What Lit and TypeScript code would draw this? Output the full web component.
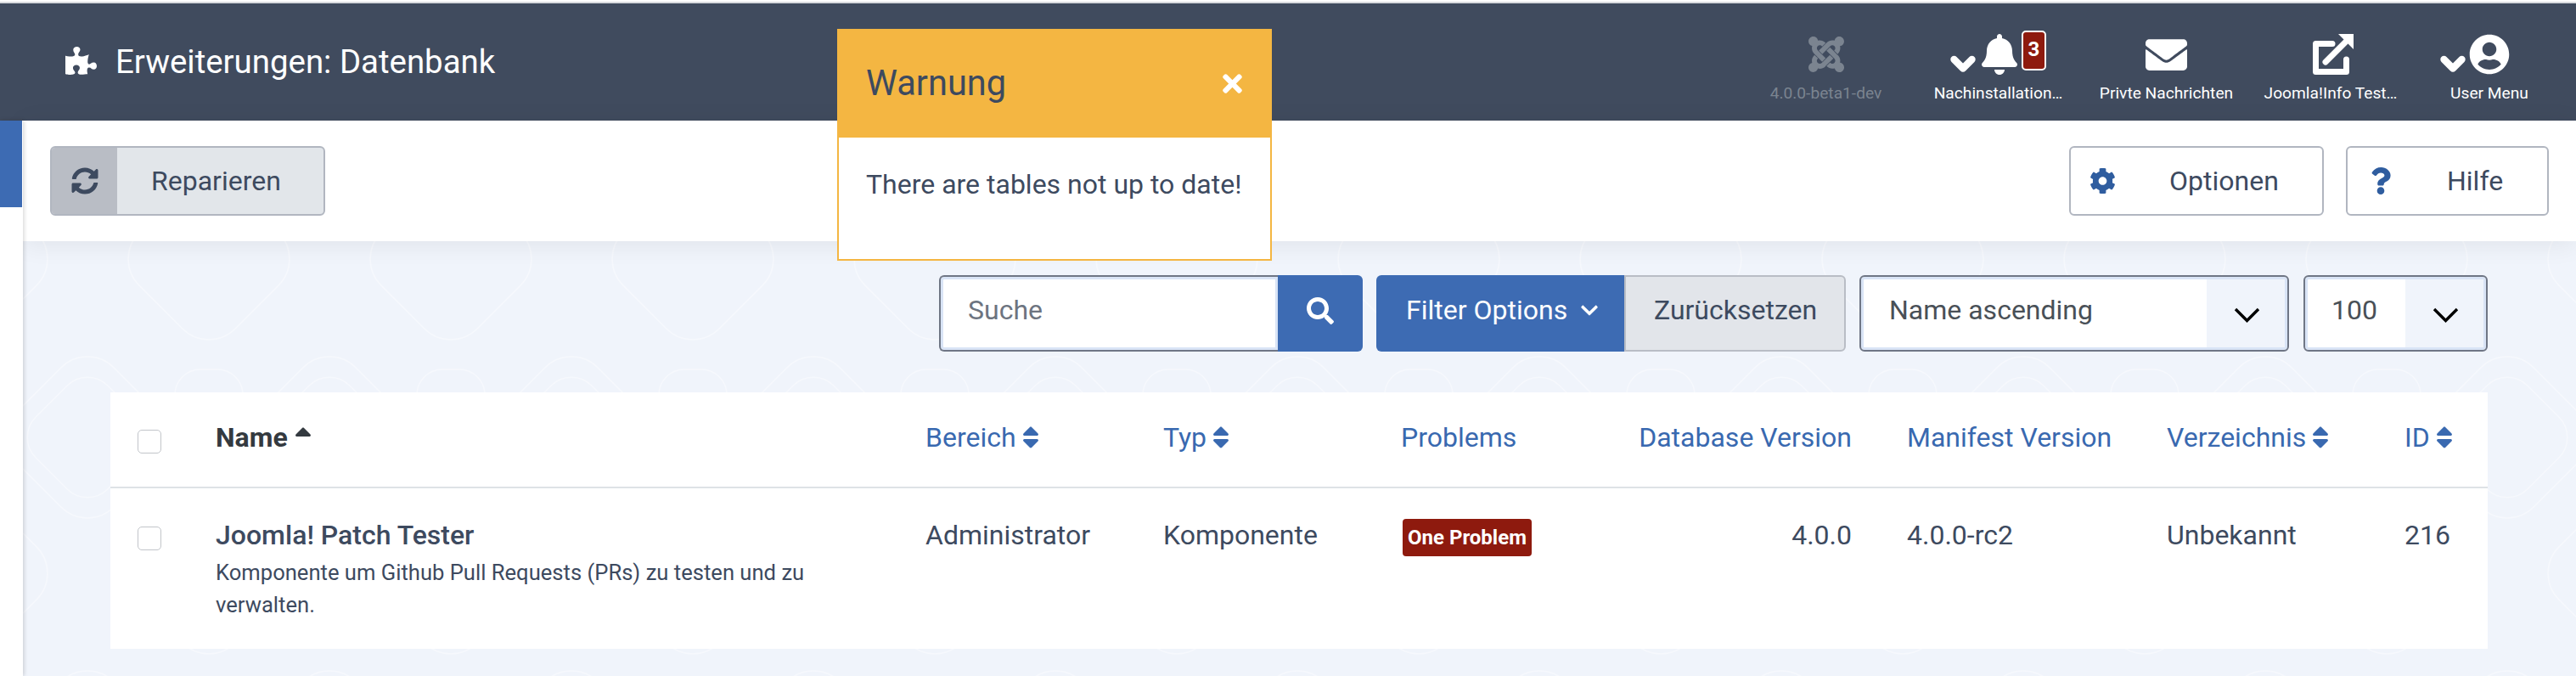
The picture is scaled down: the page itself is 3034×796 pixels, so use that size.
import { LitElement, html, css } from "lit";
import { customElement } from "lit/decorators.js";

const P = {
  puzzle: "M519.442 288.651c-41.519 0-59.5 31.593-82.058 31.593C377.409 320.244 432 144 432 144s-196.288 80-196.288-3.297c0-35.827 36.288-46.25 36.288-85.985C272 19.216 243.885 0 210.539 0c-34.654 0-66.366 18.891-66.366 56.346 0 41.364 31.711 59.277 31.711 81.75C175.885 207.719 0 166.758 0 166.758v333.237s178.635 41.047 178.635-28.662c0-22.473-40-40.107-40-81.471 0-37.456 29.25-56.346 63.577-56.346 33.673 0 61.788 19.216 61.788 54.717 0 39.735-36.288 50.158-36.288 85.985 0 60.803 129.675 25.73 181.23 25.73 0 0-34.725-120.101 25.827-120.101 35.962 0 46.423 36.152 86.308 36.152C556.712 416 576 387.99 576 354.443c0-34.199-18.962-65.792-56.558-65.792z",
  sync: "M370.72 133.28C339.458 104.008 298.888 87.962 255.848 88c-77.458.068-144.328 53.178-162.791 126.85-1.344 5.363-6.122 9.15-11.651 9.15H24.103c-7.498 0-13.194-6.807-11.807-14.176C33.933 94.924 134.813 8 256 8c66.448 0 126.791 26.136 171.315 68.685L463.03 40.97C478.149 25.851 504 36.559 504 57.941V192c0 13.255-10.745 24-24 24H345.941c-21.382 0-32.09-25.851-16.971-40.971l41.75-41.749zM32 296h134.059c21.382 0 32.09 25.851 16.971 40.971l-41.75 41.75c31.262 29.273 71.835 45.319 114.876 45.28 77.418-.07 144.315-53.144 162.787-126.849 1.344-5.363 6.122-9.15 11.651-9.15h57.304c7.498 0 13.194 6.807 11.807 14.176C478.067 417.076 377.187 504 256 504c-66.448 0-126.791-26.136-171.315-68.685L48.97 471.03C33.851 486.149 8 475.441 8 454.059V320c0-13.255 10.745-24 24-24z",
  cog: "M487.4 315.7l-42.6-24.6c4.3-23.2 4.3-47 0-70.2l42.6-24.6c4.9-2.8 7.1-8.6 5.5-14-11.1-35.6-30-67.8-54.7-94.6-3.8-4.1-10-5.1-14.8-2.3L380.8 110c-17.9-15.4-38.5-27.3-60.8-35.1V25.8c0-5.6-3.9-10.5-9.4-11.7-36.7-8.2-74.3-7.8-109.2 0-5.5 1.2-9.4 6.1-9.4 11.7V75c-22.2 7.9-42.8 19.8-60.8 35.1L88.7 85.5c-4.9-2.8-11-1.9-14.8 2.3-24.7 26.7-43.6 58.9-54.7 94.6-1.7 5.4.6 11.2 5.5 14L67.3 221c-4.3 23.2-4.3 47 0 70.2l-42.6 24.6c-4.9 2.8-7.1 8.6-5.5 14 11.1 35.6 30 67.8 54.7 94.6 3.8 4.1 10 5.1 14.8 2.3l42.6-24.6c17.9 15.4 38.5 27.3 60.8 35.1v49.2c0 5.6 3.9 10.5 9.4 11.7 36.7 8.2 74.3 7.8 109.2 0 5.5-1.2 9.4-6.1 9.4-11.7v-49.2c22.2-7.9 42.8-19.8 60.8-35.1l42.6 24.6c4.9 2.8 11 1.9 14.8-2.3 24.7-26.7 43.6-58.9 54.7-94.6 1.5-5.5-.7-11.3-5.6-14.1zM256 336c-44.1 0-80-35.9-80-80s35.9-80 80-80 80 35.9 80 80-35.9 80-80 80z",
  question: "M202.021 0C122.202 0 70.503 32.703 29.914 91.026c-7.363 10.58-5.093 25.086 5.178 32.874l43.138 32.709c10.373 7.865 25.132 6.026 33.253-4.148 25.049-31.381 43.63-49.449 82.757-49.449 30.764 0 68.816 19.799 68.816 49.631 0 22.552-18.617 34.134-48.993 51.164-35.423 19.86-82.299 44.576-82.299 106.405V320c0 13.255 10.745 24 24 24h72.471c13.255 0 24-10.745 24-24v-5.773c0-42.86 125.268-44.645 125.268-160.627C377.504 66.256 286.902 0 202.021 0zM192 373.459c-38.196 0-69.271 31.075-69.271 69.271 0 38.195 31.075 69.27 69.271 69.27s69.271-31.075 69.271-69.271-31.075-69.27-69.271-69.27z",
  bell: "M224 512c35.32 0 63.97-28.65 63.97-64H160.03c0 35.35 28.65 64 63.97 64zm215.39-149.71c-19.32-20.76-55.47-51.99-55.47-154.29 0-77.7-54.48-139.9-127.94-155.16V32c0-17.67-14.32-32-31.98-32s-31.98 14.33-31.98 32v20.84C118.56 68.1 64.08 130.3 64.08 208c0 102.3-36.15 133.53-55.47 154.29-6 6.45-8.66 14.16-8.61 21.71.11 16.4 12.98 32 32.1 32h383.8c19.12 0 32-15.6 32.1-32 .05-7.55-2.61-15.27-8.61-21.71z",
  envelope: "M502.3 190.8c3.9-3.1 9.7-.2 9.7 4.7V400c0 26.5-21.5 48-48 48H48c-26.5 0-48-21.5-48-48V195.6c0-5 5.7-7.8 9.7-4.7 22.4 17.4 52.1 39.5 154.1 113.6 21.1 15.4 56.7 47.8 92.2 47.6 35.7.3 72-32.8 92.3-47.6 102-74.1 131.6-96.3 154-113.7zM256 320c23.2.4 56.6-29.2 73.4-41.4 132.7-96.3 142.8-104.7 173.4-128.7 5.8-4.5 9.2-11.5 9.2-18.9v-19c0-26.5-21.5-48-48-48H48C21.5 64 0 85.5 0 112v19c0 7.4 3.4 14.3 9.2 18.9 30.6 23.9 40.7 32.4 173.4 128.7 16.8 12.2 50.2 41.8 73.4 41.4z",
  user: "M248 8C111 8 0 119 0 256s111 248 248 248 248-111 248-248S385 8 248 8zm0 96c48.6 0 88 39.4 88 88s-39.4 88-88 88-88-39.4-88-88 39.4-88 88-88zm0 344c-58.7 0-111.3-26.6-146.5-68.2 18.8-35.4 55.6-59.8 98.5-59.8 2.4 0 4.8.4 7.1 1.1 13 4.2 26.6 6.9 40.9 6.9 14.3 0 28-2.7 40.9-6.9 2.3-.7 4.7-1.1 7.1-1.1 42.9 0 79.7 24.4 98.5 59.8C359.3 421.4 306.7 448 248 448z",
  chevron: "M207.029 381.476L12.686 187.132c-9.373-9.373-9.373-24.569 0-33.941l22.667-22.667c9.357-9.357 24.522-9.375 33.901-.04L224 284.505l154.745-154.021c9.379-9.335 24.544-9.317 33.901.04l22.667 22.667c9.373 9.373 9.373 24.569 0 33.941L240.971 381.476c-9.373 9.372-24.569 9.372-33.942 0z",
  times: "M242.72 256l100.07-100.07c12.28-12.28 12.28-32.19 0-44.48l-22.24-22.24c-12.28-12.28-32.19-12.28-44.48 0L176 189.28 75.93 89.21c-12.28-12.28-32.19-12.28-44.48 0L9.21 111.45c-12.28 12.28-12.28 32.19 0 44.48L109.28 256 9.21 356.07c-12.28 12.28-12.28 32.19 0 44.48l22.24 22.24c12.28 12.28 32.2 12.28 44.48 0L176 322.72l100.07 100.07c12.28 12.28 32.2 12.28 44.48 0l22.24-22.24c12.28-12.28 12.28-32.19 0-44.48L242.72 256z",
  search: "M505 442.7L405.3 343c-4.5-4.5-10.6-7-17-7H372c27.6-35.3 44-79.7 44-128C416 93.1 322.9 0 208 0S0 93.1 0 208s93.1 208 208 208c48.3 0 92.7-16.4 128-44v16.3c0 6.4 2.5 12.5 7 17l99.7 99.7c9.4 9.4 24.6 9.4 33.9 0l28.3-28.3c9.4-9.4 9.4-24.6.1-34zM208 336c-70.7 0-128-57.2-128-128 0-70.7 57.2-128 128-128 70.7 0 128 57.2 128 128 0 70.7-57.2 128-128 128z",
  joomla: "M.6 92.1C.6 58.8 27.4 32 60.4 32c30 0 54.5 21.9 59.2 50.2 32.6-7.6 67.1.6 96.5 30l-44.3 44.3c-20.5-20.5-42.6-16.3-55.4-3.5-14.3 14.3-14.3 37.9 0 52.2l99.5 99.5-44 44.3c-87.7-87.2-49.7-49.7-99.8-99.7-26.8-26.5-35-64.8-24.8-98.9C20.4 144.6.6 120.7.6 92.1zm129.5 116.4l44.3 44.3c10-10 89.7-89.7 99.7-99.8 14.3-14.3 37.6-14.3 51.9 0 12.8 12.8 17 35-3.5 55.4l44 44.3c31.2-31.2 38.5-67.6 28.9-101.2 29.2-4.1 51.9-29.2 51.9-59.5 0-33.2-26.8-60.1-59.8-60.1-30.3 0-55.4 22.5-59.5 51.6-33.8-9.9-71.7-1.5-98.3 25.1-18.3 19.1-71.1 71.5-99.6 99.9zm266.3 152.2c8.2-32.7-.9-68.5-26.3-93.9-11.8-12-97.5-97.9-99.5-100l-44 44.3 99.5 99.5c14.3 14.3 14.3 37.6 0 51.9-12.8 12.8-35 17-55.4-3.5l-44 44.3c27.6 30.2 68 38.8 102.7 28 5.5 27.4 29.7 48.1 58.9 48.1 33 0 59.8-26.8 59.8-60.1 0-30.2-22.5-55-51.6-58.6zm-84.3-53.1l-44-44.3c-87.2 86.5-50.4 50.4-99.7 99.8-14.3 14.3-37.6 14.3-51.9 0-13.1-13.4-16.9-35.3 3.2-55.4l-44-44.3c-30.2 30.2-38 65.2-29.5 98.3-26.7 6-46.2 29.9-46.2 58.2C0 453.2 26.8 480 59.8 480c28.6 0 52.5-19.8 58.6-46.7 32.7 8.2 68.5-.6 94.2-26 32.1-32 12.2-12.4 99.5-99.7z",
  sort: "M41 288h238c21.4 0 32.1 25.9 17 41L177 448c-9.4 9.4-24.6 9.4-33.9 0L24 329c-15.1-15.1-4.4-41 17-41zm255-105L177 64c-9.4-9.4-24.6-9.4-33.9 0L24 183c-15.1 15.1-4.4 41 17 41h238c21.4 0 32.1-25.9 17-41z",
  sortUp: "M279 224H41c-21.4 0-32.1-25.9-17-41L143 64c9.4-9.4 24.6-9.4 33.9 0l119 119c15.2 15.1 4.5 41-16.9 41z",
};

const icon = (box: string, d: string, cls: string) =>
  html`<svg class=${cls} viewBox=${box} fill="currentColor" aria-hidden="true"><path d=${d}></path></svg>`;

const sortable = (label: string, withSort = true) =>
  html`<span class="th-link">${label}${withSort ? icon("0 0 320 512", P.sort, "sort") : ""}</span>`;

const headChevron = html`<svg class="chev" viewBox="0 0 30 20" aria-hidden="true"><path d="M4.5 5L15 15.5L25.5 5" fill="none" stroke="currentColor" stroke-width="8.4" stroke-linecap="round" stroke-linejoin="round"></path></svg>`;

const caret = html`<span class="caret"><svg viewBox="0 0 31 18" aria-hidden="true"><path d="M2 2L15.5 15.5L29 2" fill="none" stroke="currentColor" stroke-width="3.4"></path></svg></span>`;

@customElement("app-root")
export class AppRoot extends LitElement {
  static styles = css`
    :host {
      display: block;
      font-family: Roboto, "Liberation Sans", sans-serif;
      color: #3d4a5f;
      font-size: 32px;
      line-height: 48px;
    }
    * { box-sizing: border-box; }
    svg { display: block; flex: none; }
    .page { position: relative; height: 796px; overflow: hidden; background: #fff; }
    .strip { height: 2px; margin-top: 2px; background: #d9dbdf; }

    .header {
      height: 138px;
      background: #404b5e;
      color: #fff;
      display: flex;
      align-items: center;
      justify-content: space-between;
      padding: 0 10px 0 77px;
    }
    .brand { display: flex; align-items: center; gap: 22px; font-size: 38.4px; line-height: 46px; }
    .puzzle { width: 37px; height: 37px; margin-top: -4px; }
    .tray { display: grid; grid-template-columns: 207px 199px 197px 190px 184px; }
    .item { display: flex; flex-direction: column; align-items: center; padding-top: 34px; height: 138px; }
    .item.muted { color: #7b8490; }
    .icons { height: 52px; display: flex; align-items: center; gap: 7px; }
    .caption { font-size: 19.2px; line-height: 24px; margin-top: 8px; white-space: nowrap; }
    .logo { width: 42px; height: 48px; }
    .chev { width: 30px; height: 20px; margin-top: 22px; }
    .bell { width: 42px; height: 48px; }
    .badge3 {
      width: 29px; height: 47px; margin: -9px 0 0 -2px;
      background: #8e1a0e; border: 2px solid #fff; border-radius: 5px;
      font-size: 24px; line-height: 41px; font-weight: 700; text-align: center;
    }
    .env { width: 49px; height: 49px; }
    .ext { width: 48px; height: 48px; margin-left: 5px; }
    .user { width: 48px; height: 48px; }
    .icons.shift { margin-right: 34px; gap: 4px; }

    .body { display: flex; height: 654px; }
    .side { width: 27px; flex: none; background: #fff; box-shadow: 1px 0 5px rgba(0, 0, 0, .18); position: relative; z-index: 2; }
    .side-active { height: 102px; width: 26px; background: #3d6bb3; }
    .main {
      flex: 1;
      min-width: 0;
      background-color: #f0f4fb;
      background-image: url("data:image/svg+xml,%3Csvg xmlns='http://www.w3.org/2000/svg' width='285' height='370' fill='none' stroke='%23fff' stroke-opacity='.4' stroke-width='1.5'%3E%3Crect x='62' y='20' width='160' height='160' rx='44' transform='rotate(45 142 100)'/%3E%3Crect x='82' y='40' width='120' height='120' rx='34' transform='rotate(45 142 100)'/%3E%3Crect x='-80' y='180' width='160' height='160' rx='44' transform='rotate(45 0 260)'/%3E%3Crect x='205' y='180' width='160' height='160' rx='44' transform='rotate(45 285 260)'/%3E%3Crect x='-40' y='20' width='80' height='130' rx='30'/%3E%3Crect x='245' y='20' width='80' height='130' rx='30'/%3E%3C/svg%3E");
      background-position: 219px 273px;
    }
    .toolbar {
      height: 142px;
      background: #fff;
      display: flex;
      align-items: center;
      gap: 26px;
      padding: 0 32px;
      position: relative;
      box-shadow: 0 4px 28px rgba(0, 0, 0, .07);
    }
    .spacer { flex: 1; }
    .btn {
      height: 82px;
      display: flex;
      align-items: center;
      border: 2px solid #b1b6c0;
      border-radius: 6px;
      color: #3d4a5f;
      white-space: nowrap;
    }
    .repair { width: 324px; background: #e2e6ea; overflow: hidden; }
    .repair-icon { width: 77px; align-self: stretch; background: #b9bdc5; display: flex; align-items: center; justify-content: center; }
    .sync { width: 32px; height: 32px; }
    .repair-label { padding-left: 40px; }
    .opt { width: 300px; background: #fff; padding-left: 22px; gap: 63px; }
    .cog { width: 31px; height: 32px; color: #2f5d9f; }
    .help { width: 239px; background: #fff; padding-left: 27px; gap: 66px; }
    .qmark { width: 24px; height: 32px; color: #2f5d9f; }

    .filters { display: flex; justify-content: flex-end; padding: 40px 104px 0 0; height: 178px; }
    .search { width: 499px; height: 90px; display: flex; }
    .field {
      height: 90px;
      border: 2px solid #6f7685;
      box-shadow: inset 0 0 0 3px #d9e4f6;
      border-radius: 6px;
      background: #fff;
      display: flex;
      align-items: center;
      overflow: hidden;
    }
    .search .field { width: 399px; border-radius: 6px 0 0 6px; border-right: 0; padding: 0 0 8px 32px; color: #6d7480; }
    .search-btn { width: 100px; background: #3d6bb3; color: #fff; border-radius: 0 6px 6px 0; display: flex; align-items: center; justify-content: center; padding-bottom: 6px; }
    .search-btn svg { width: 32px; height: 32px; }
    .filter-group { display: flex; margin-left: 16px; height: 90px; }
    .filter-btn { width: 292px; background: #3d6bb3; color: #fff; border-radius: 6px 0 0 6px; display: flex; align-items: center; padding: 0 0 8px 35px; gap: 16px; }
    .filter-btn svg { width: 20px; height: 23px; }
    .reset { width: 261px; background: #e2e5ea; border: 2px solid #b9bdc5; border-radius: 0 6px 6px 0; display: flex; align-items: center; padding: 0 0 8px 33px; }
    .select { color: #495057; padding-left: 33px; margin-left: 16px; line-height: 48px; }
    .select.sort-by { width: 506px; }
    .select.limit { width: 217px; margin-left: 17px; padding-left: 31px; }
    .select-value { margin-top: -8px; flex: 1; }
    .caret { width: 92px; align-self: stretch; margin: 3px 3px 3px 0; background: #f0f4fb; display: flex; align-items: center; justify-content: center; color: #000; flex: none; }
    .caret svg { width: 31px; height: 18px; margin: 4px 0 0 3px; }

    .table {
      margin: 0 104px 0 103px;
      background: #fff;
      height: 302px;
      display: grid;
      grid-template-columns: 124px 836px 280px 280px 250px 346px 306px 280px 98px;
      grid-template-rows: 113px 1fr;
    }
    .cell { padding-top: 29px; }
    .head { border-bottom: 2px solid #dee2e6; color: #3969b0; }
    .body-cell { padding-top: 31px; }
    .check-cell { padding: 44px 0 0 32px; }
    .check-cell.first { padding-top: 45px; }
    .check { width: 28px; height: 28px; border: 1.5px solid #c2c5ca; border-radius: 5px; background: #fff; }
    .th-link { display: inline-flex; align-items: center; gap: 7px; color: #3969b0; white-space: nowrap; }
    .sort { width: 20px; height: 32px; }
    .name-head { display: inline-flex; align-items: center; gap: 8px; color: #343a40; font-weight: 700; }
    .sort-up { width: 20px; height: 32px; margin-top: 2px; }
    .right { text-align: right; padding-right: 65px; }
    .title { font-weight: 500; color: #3d4a5f; white-space: nowrap; }
    .desc { font-size: 25.6px; line-height: 38px; margin-top: 1px; padding-right: 60px; }
    .pill {
      display: inline-block; margin: 5px 0 0 2px;
      width: 152px; height: 44px;
      background: #8e1a0e; color: #fff; border-radius: 4px;
      font-size: 24px; line-height: 44px; font-weight: 700; text-align: center; white-space: nowrap;
    }

    .toast {
      position: absolute; left: 986px; top: 34px;
      width: 512px; height: 273px;
      background: #fff;
      border: 2px solid #f4b642;
      border-top: 0;
      z-index: 5;
    }
    .toast-head {
      height: 128px; margin: 0 -2px;
      background: #f4b642;
      display: flex; align-items: center; justify-content: space-between;
      padding: 0 35px 0 34px;
      font-size: 41.6px; line-height: 50px;
    }
    .close { width: 23px; height: 33px; color: #fff; }
    .toast-body { padding: 31px 32px 0; white-space: nowrap; }
  `;

  render() {
    return html`
      <div class="page">
        <div class="strip"></div>
        <header class="header">
          <div class="brand">
            ${icon("0 0 576 512", P.puzzle, "puzzle")}
            <span>Erweiterungen: Datenbank</span>
          </div>
          <nav class="tray">
            <div class="item muted">
              <div class="icons">${icon("0 0 448 512", P.joomla, "logo")}</div>
              <div class="caption">4.0.0-beta1-dev</div>
            </div>
            <div class="item">
              <div class="icons">
                ${headChevron}
                ${icon("0 0 448 512", P.bell, "bell")}
                <div class="badge3">3</div>
              </div>
              <div class="caption">Nachinstallation…</div>
            </div>
            <div class="item">
              <div class="icons">${icon("0 0 512 512", P.envelope, "env")}</div>
              <div class="caption">Privte Nachrichten</div>
            </div>
            <div class="item">
              <div class="icons">
                <svg class="ext" viewBox="0 0 48 48" aria-hidden="true">
                  <path d="M23 11.5H3.5V44.5H39.5V30" fill="none" stroke="currentColor" stroke-width="7" stroke-linejoin="round" stroke-linecap="round"></path>
                  <path d="M15 33L41 7" fill="none" stroke="currentColor" stroke-width="7" stroke-linecap="round"></path>
                  <path d="M30 0H48V18Z" fill="currentColor"></path>
                </svg>
              </div>
              <div class="caption">Joomla!Info Test…</div>
            </div>
            <div class="item">
              <div class="icons shift">
                ${headChevron}
                ${icon("0 0 496 512", P.user, "user")}
              </div>
              <div class="caption">User Menu</div>
            </div>
          </nav>
        </header>

        <div class="body">
          <aside class="side"><div class="side-active"></div></aside>
          <main class="main">
            <div class="toolbar">
              <div class="btn repair">
                <span class="repair-icon">${icon("0 0 512 512", P.sync, "sync")}</span>
                <span class="repair-label">Reparieren</span>
              </div>
              <span class="spacer"></span>
              <div class="btn opt">${icon("0 0 512 512", P.cog, "cog")}<span>Optionen</span></div>
              <div class="btn help">${icon("0 0 384 512", P.question, "qmark")}<span>Hilfe</span></div>
            </div>

            <div class="filters">
              <div class="search">
                <div class="field">Suche</div>
                <div class="search-btn">${icon("0 0 512 512", P.search, "")}</div>
              </div>
              <div class="filter-group">
                <div class="filter-btn">Filter Options ${icon("0 0 448 512", P.chevron, "")}</div>
                <div class="reset">Zurücksetzen</div>
              </div>
              <div class="field select sort-by">
                <span class="select-value">Name ascending</span>
                ${caret}
              </div>
              <div class="field select limit">
                <span class="select-value">100</span>
                ${caret}
              </div>
            </div>

            <div class="table">
              <div class="head check-cell"><div class="check"></div></div>
              <div class="head cell"><span class="name-head">Name ${icon("0 0 320 512", P.sortUp, "sort-up")}</span></div>
              <div class="head cell">${sortable("Bereich")}</div>
              <div class="head cell">${sortable("Typ")}</div>
              <div class="head cell">${sortable("Problems", false)}</div>
              <div class="head cell right">${sortable("Database Version", false)}</div>
              <div class="head cell">${sortable("Manifest Version", false)}</div>
              <div class="head cell">${sortable("Verzeichnis")}</div>
              <div class="head cell">${sortable("ID")}</div>

              <div class="check-cell first"><div class="check"></div></div>
              <div class="body-cell">
                <div class="title">Joomla! Patch Tester</div>
                <div class="desc">Komponente um Github Pull Requests (PRs) zu testen und zu verwalten.</div>
              </div>
              <div class="body-cell">Administrator</div>
              <div class="body-cell">Komponente</div>
              <div class="body-cell"><span class="pill">One Problem</span></div>
              <div class="body-cell right">4.0.0</div>
              <div class="body-cell">4.0.0-rc2</div>
              <div class="body-cell">Unbekannt</div>
              <div class="body-cell">216</div>
            </div>
          </main>
        </div>

        <section class="toast">
          <div class="toast-head">
            <span>Warnung</span>
            ${icon("0 0 352 512", P.times, "close")}
          </div>
          <div class="toast-body">There are tables not up to date!</div>
        </section>
      </div>
    `;
  }
}
